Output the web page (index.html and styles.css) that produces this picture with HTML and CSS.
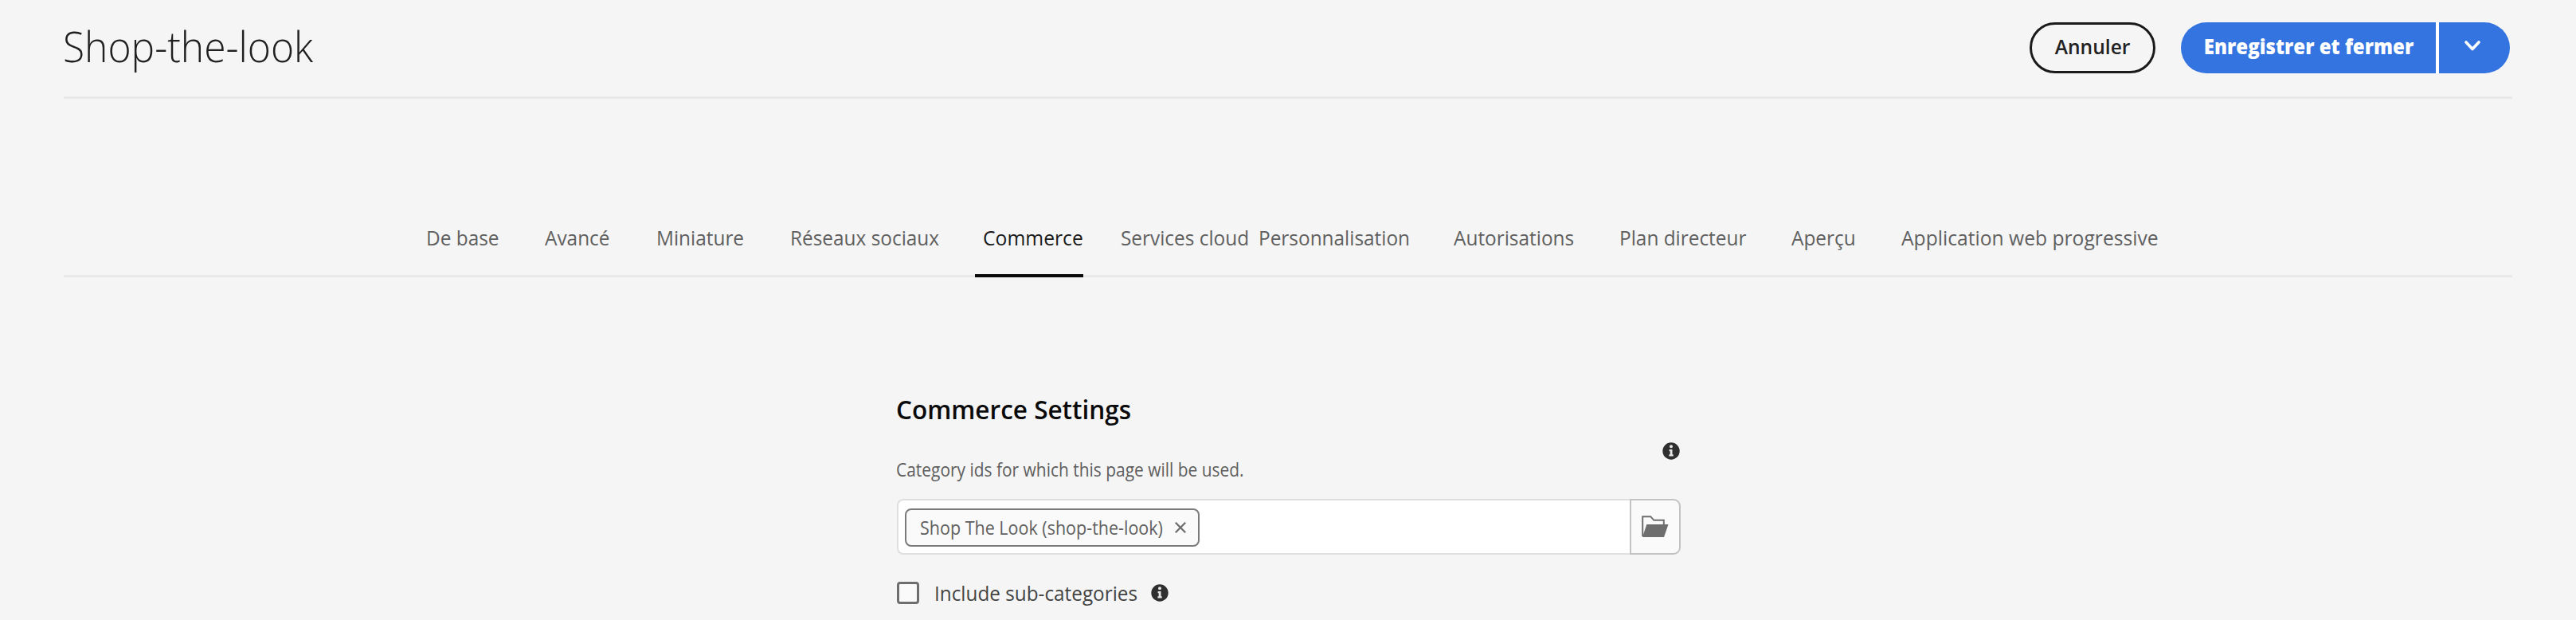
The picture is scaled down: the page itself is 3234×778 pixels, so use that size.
FILE: index.html
```
<!DOCTYPE html>
<html lang="fr">
<head>
<meta charset="utf-8">
<title>Shop-the-look</title>
<link rel="stylesheet" href="styles.css">
</head>
<body>
<header class="header">
  <h1 class="title">Shop-the-look</h1>
  <div class="actions">
    <button class="btn btn-outline"><span class="btn-text">Annuler</span></button>
    <div class="split">
      <button class="btn btn-primary"><span class="btn-text">Enregistrer et fermer</span></button>
      <button class="btn btn-caret" aria-label="Plus">
        <svg width="22" height="15" viewBox="0 0 22 15"><path d="M3 3l8 8.5L19 3" fill="none" stroke="#fff" stroke-width="3.6" stroke-linecap="round" stroke-linejoin="round"/></svg>
      </button>
    </div>
  </div>
</header>
<nav class="tabs">
  <a class="tab"><span>De base</span></a>
  <a class="tab"><span>Avancé</span></a>
  <a class="tab"><span>Miniature</span></a>
  <a class="tab"><span>Réseaux sociaux</span></a>
  <a class="tab tab-active"><span>Commerce</span></a>
  <a class="tab"><span>Services cloud</span></a>
  <a class="tab"><span>Personnalisation</span></a>
  <a class="tab"><span>Autorisations</span></a>
  <a class="tab"><span>Plan directeur</span></a>
  <a class="tab"><span>Aperçu</span></a>
  <a class="tab"><span>Application web progressive</span></a>
</nav>
<main class="panel">
  <h2 class="heading">Commerce Settings</h2>
  <div class="label-row">
    <label class="label">Category ids for which this page will be used.</label>
    <svg class="info" width="22" height="22" viewBox="0 0 22 22"><circle cx="11" cy="11" r="10.7" fill="#2f2f2f"/><circle cx="11" cy="5.2" r="2" fill="#e6e6e6"/><path d="M8.6 9h3.9v6.2h1.2v2.3H8.4v-2.3h1.3v-3.9H8.6z" fill="#e6e6e6"/></svg>
  </div>
  <div class="field">
    <div class="input">
      <span class="tag">
        <span class="tag-text">Shop The Look (shop-the-look)</span>
        <svg width="16" height="16" viewBox="0 0 16 16"><path d="M1.8 1.8l12.4 12.4M14.2 1.8L1.8 14.2" stroke="#6e6e6e" stroke-width="2.3"/></svg>
      </span>
    </div>
    <button class="browse" aria-label="Parcourir">
      <svg width="34" height="28" viewBox="0 0 34 28"><path d="M1.2 26V1.2h10l4.2 4.6h12.4V11" fill="none" stroke="#6e6e6e" stroke-width="2"/><path d="M6.3 11H33.5L28 27H1z" fill="#6e6e6e"/></svg>
    </button>
  </div>
  <div class="check-row">
    <span class="checkbox"></span>
    <span class="check-label">Include sub-categories</span>
    <svg class="info" width="22" height="22" viewBox="0 0 22 22"><circle cx="11" cy="11" r="10.7" fill="#2f2f2f"/><circle cx="11" cy="5.2" r="2" fill="#e6e6e6"/><path d="M8.6 9h3.9v6.2h1.2v2.3H8.4v-2.3h1.3v-3.9H8.6z" fill="#e6e6e6"/></svg>
  </div>
</main>
</body>
</html>
```
FILE: styles.css
```
* { box-sizing: border-box; }
body {
  margin: 0;
  height: 778px;
  overflow: hidden;
  background: #f5f5f5;
  color: #4b4b4b;
  font-family: "Open Sans", "Noto Sans", sans-serif;
}
button { font: inherit; margin: 0; padding: 0; border: 0; }
svg { display: block; flex: none; }
.header {
  display: flex;
  justify-content: space-between;
  align-items: flex-start;
  height: 124px;
  margin: 0 80px;
  padding: 28px 3px 0 0;
  border-bottom: 3px solid #e8e8e8;
}
.title {
  margin: -6px 0 0 -1px;
  font-size: 53px;
  line-height: 72px;
  font-weight: 300;
  color: #202020;
  transform: scaleX(0.938);
  transform-origin: 0 50%;
}
.actions { display: flex; gap: 32px; }
.btn {
  display: flex;
  align-items: center;
  justify-content: center;
  height: 64px;
  padding-bottom: 4px;
  font-size: 26px;
  white-space: nowrap;
}
.btn-outline {
  width: 158px;
  border: 3px solid #1a1a1a;
  border-radius: 32px;
  background: #f5f5f5;
  color: #222;
  font-weight: 600;
}
.btn-text { transform: scaleX(0.945); }
.split { display: flex; gap: 4px; background: linear-gradient(#fff, #fff) 320px 0 / 4px 100% no-repeat; }
.btn-primary {
  width: 320px;
  border-radius: 32px 0 0 32px;
  background: #3474e0;
  color: #fff;
  font-weight: 800;
}
.btn-primary .btn-text { transform: scaleX(0.925); }
.btn-caret {
  width: 89px;
  padding: 0 6px 6px 0;
  border-radius: 0 32px 32px 0;
  background: #3474e0;
}
.tabs {
  display: grid;
  grid-template-columns: 149px 140px 168px 231px 184px 173px 245px 208px 216px 138px 330px;
  height: 224px;
  margin: 0 80px;
  padding: 149px 0 0 455px;
  background: linear-gradient(#e8e8e8, #e8e8e8) 0 221px / 100% 3px no-repeat;
}
.tab {
  padding-top: 7px;
  font-size: 26px;
  line-height: 36px;
  color: #606060;
  white-space: nowrap;
}
.tab span { display: inline-block; transform: scaleX(0.938); transform-origin: 0 50%; }
.tab:last-child span { transform: scaleX(0.948); }
.tab-active {
  width: 136px;
  margin-left: 1px;
  padding-left: 10px;
  border-bottom: 4px solid #0a0a0a;
  color: #1a1a1a;
}
.tab-active span { transform: scaleX(0.95); }
.panel { width: 984px; margin: 0 0 0 1126px; }
.heading {
  margin: 0 0 0 -1px;
  padding-top: 144px;
  font-size: 32px;
  line-height: 44px;
  font-weight: 600;
  color: #0a0a0a;
  transform: scaleX(0.985);
  transform-origin: 0 50%;
}
.label-row {
  display: flex;
  justify-content: space-between;
  height: 90px;
  padding: 19px 1px 0 0;
}
.label {
  margin-left: -1px;
  padding-top: 18px;
  font-size: 23px;
  line-height: 32px;
  color: #5e5e5e;
  white-space: nowrap;
  transform: scaleX(0.91);
  transform-origin: 0 50%;
}
.field { display: flex; height: 70px; }
.input {
  width: 920px;
  padding: 10px 8px;
  border: 2px solid #dfdfdf;
  border-right: 0;
  border-radius: 8px 0 0 8px;
  background: #fff;
}
.tag {
  display: flex;
  align-items: center;
  justify-content: space-between;
  width: 370px;
  height: 48px;
  padding: 0 14px 0 17px;
  border: 2px solid #7b7b7b;
  border-radius: 8px;
  background: #fafafa;
  color: #606060;
  font-size: 23px;
  white-space: nowrap;
}
.tag-text { width: 305px; transform: scaleX(0.935); transform-origin: 0 50%; }
.browse {
  display: flex;
  align-items: center;
  justify-content: center;
  width: 64px;
  border: 2px solid #c3c3c3;
  border-radius: 0 9px 9px 0;
  background: #fafafa;
}
.check-row { display: flex; align-items: center; height: 40px; margin-top: 28px; }
.checkbox { width: 28px; height: 28px; border: 3px solid #6e6e6e; border-radius: 4px; background: #fafafa; }
.check-label {
  width: 272px;
  margin-left: 19px;
  font-size: 26px;
  line-height: 36px;
  color: #444;
  white-space: nowrap;
  transform: scaleX(0.935);
  transform-origin: 0 50%;
}
```
